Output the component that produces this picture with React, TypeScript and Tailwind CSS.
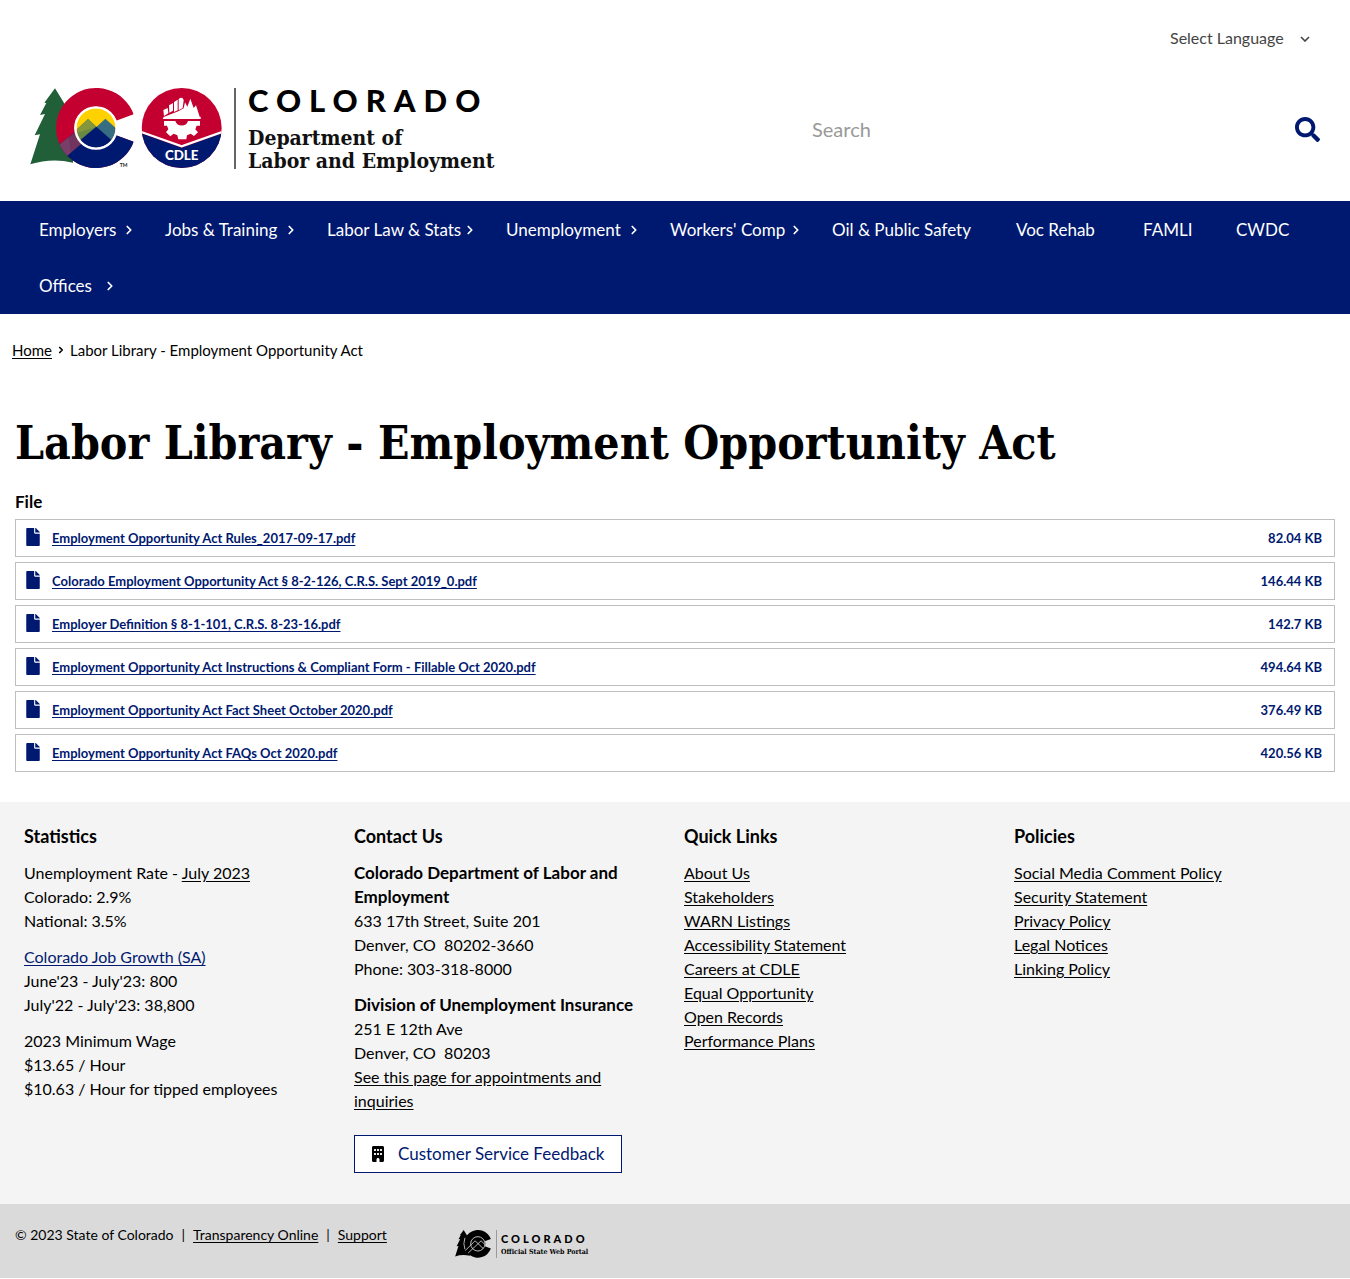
import React from "react";
import { FaFile, FaSearch } from "react-icons/fa";
import { FaBuilding } from "react-icons/fa6";
import { ChevronRight } from "lucide-react";

const serif = "font-['DejaVu_Serif_Condensed','DejaVu_Serif',serif]";

const navItems: { label: string; width: string; menu: boolean }[] = [
  { label: "Employers", width: "min-w-[126px]", menu: true },
  { label: "Jobs & Training", width: "min-w-[162px]", menu: true },
  { label: "Labor Law & Stats", width: "min-w-[179px]", menu: true },
  { label: "Unemployment", width: "min-w-[164px]", menu: true },
  { label: "Workers' Comp", width: "min-w-[162px]", menu: true },
  { label: "Oil & Public Safety", width: "min-w-[184px]", menu: false },
  { label: "Voc Rehab", width: "min-w-[127px]", menu: false },
  { label: "FAMLI", width: "min-w-[93px]", menu: false },
  { label: "CWDC", width: "min-w-[98px]", menu: false },
  { label: "Offices", width: "min-w-[107px]", menu: true },
];

const files = [
  ["Employment Opportunity Act Rules_2017-09-17.pdf", "82.04 KB"],
  ["Colorado Employment Opportunity Act § 8-2-126, C.R.S. Sept 2019_0.pdf", "146.44 KB"],
  ["Employer Definition § 8-1-101, C.R.S. 8-23-16.pdf", "142.7 KB"],
  ["Employment Opportunity Act Instructions & Compliant Form - Fillable Oct 2020.pdf", "494.64 KB"],
  ["Employment Opportunity Act Fact Sheet October 2020.pdf", "376.49 KB"],
  ["Employment Opportunity Act FAQs Oct 2020.pdf", "420.56 KB"],
];

const quickLinks = [
  "About Us",
  "Stakeholders",
  "WARN Listings",
  "Accessibility Statement",
  "Careers at CDLE",
  "Equal Opportunity",
  "Open Records",
  "Performance Plans",
];

const policies = [
  "Social Media Comment Policy",
  "Security Statement",
  "Privacy Policy",
  "Legal Notices",
  "Linking Policy",
];

function Link({ children, className = "" }: { children: React.ReactNode; className?: string }) {
  return (
    <a href="#" className={`underline underline-offset-2 ${className}`}>
      {children}
    </a>
  );
}

const tree =
  "M81 13 L110 60 L135 110 L135 236 Q70 221 7 241 L36 151 L20 154 L51 90 L36 93 L55 57 L49 56 Z";
const cShape =
  "M317 91 A120 120 0 1 0 317 173 L264 154 A64 64 0 1 1 264 110 Z";

function StateLogo() {
  return (
    <svg viewBox="6 12 576 243" className="h-[81px] w-48 shrink-0" role="img" aria-label="CDLE">
      <defs>
        <clipPath id="c-shape">
          <path d={cShape} />
        </clipPath>
        <clipPath id="disc">
          <circle cx="204" cy="132" r="59" />
        </clipPath>
        <clipPath id="badge">
          <circle cx="461" cy="132" r="120" />
        </clipPath>
      </defs>
      <path d={tree} fill="#215f38" />
      <circle cx="204" cy="132" r="66" fill="#fff" />
      <g clipPath="url(#c-shape)">
        <rect x="80" y="10" width="250" height="250" fill="#c3002f" />
        <path d="M80 192 L154 135 L204 132 L270 132 H330 V260 H80 Z" fill="#001970" />
        <path d="M85 189 L150 137 L178 165 L113 219 Z" fill="#70345f" />
        <path d="M85 189 L122 160 L128 206 L113 219 Z" fill="#793f68" />
      </g>
      <g clipPath="url(#disc)">
        <rect x="140" y="70" width="130" height="130" fill="#ffd100" />
        <path d="M140 142 L180 104 L232 152 L180 200 L140 200 Z" fill="#6a8a43" />
        <path d="M176 156 L232 104 L272 140 V200 H176 Z" fill="#376d82" />
        <path d="M204 128 L180 106 L140 142 V150 Z" fill="#85963d" />
        <path d="M140 182 L205 128 L264 180 V200 H140 Z" fill="#001970" />
      </g>
      <circle cx="204" cy="132" r="62" fill="none" stroke="#fff" strokeWidth="7" />
      <text x="275" y="250" fontSize="15" fontWeight="700" fontFamily="Lato, sans-serif" fill="#222">
        TM
      </text>

      <g clipPath="url(#badge)">
        <rect x="340" y="10" width="242" height="245" fill="#c3002f" />
        <path d="M340 148 L461 191 L582 148 V255 H340 Z" fill="#001970" />
        <path d="M340 144 L461 187 L582 144" fill="none" stroke="#fff" strokeWidth="7" />
      </g>
      <g fill="#fff">
        <path d="M406 78 L419 72 L421 88 L408 96 Z" />
        <path d="M423 64 L435 57 L435 80 L424 86 Z" />
        <path d="M438 54 L449 47 L449 79 L438 84 Z" />
        <path d="M452 45 Q463 36 467 48 L464 72 L452 79 Z" />
        <path d="M407 99 L451 82 L467 73 L471 55 L478 68 L487 44 L497 72 L504 64 L515 98 H518 V105 H404 Z" />
        <path d="M408 111 H516 V125 L506 125 L502 136 L510 145 L498 156 L488 149 L477 154 L475 166 H451 L448 154 L437 149 L427 157 L414 145 L421 136 L417 125 L408 125 Z" />
      </g>
      <path d="M442 111 A20 20 0 0 0 480 111 Z" fill="#c3002f" />
      <text x="461" y="227" textAnchor="middle" fontSize="40" fontWeight="900" fontFamily="Lato, sans-serif" fill="#fff">
        CDLE
      </text>
    </svg>
  );
}

function PortalMark() {
  return (
    <svg viewBox="6 12 312 243" className="h-7 w-9 shrink-0" aria-hidden="true">
      <path d={tree} fill="#000" />
      <path d={cShape} fill="#000" />
      <circle cx="204" cy="132" r="66" fill="#000" />
      <g fill="none" stroke="#dadada" strokeWidth="7">
        <circle cx="204" cy="132" r="62" />
        <path d="M95 190 L180 106 L250 172" />
        <path d="M120 212 L232 106 L264 136" />
        <path d="M92 80 Q74 130 92 180" />
      </g>
    </svg>
  );
}

function FooterColumn({ title, children }: { title: string; children: React.ReactNode }) {
  return (
    <section className="pr-6 pl-[9px]">
      <h2 className="mb-[13px] text-lg leading-6 font-bold">{title}</h2>
      <div className="space-y-3">{children}</div>
    </section>
  );
}

export default function App() {
  return (
    <div className="bg-white font-['Lato',sans-serif] text-base leading-6 text-black">
      <header>
        <div className="flex justify-end pt-6 pr-10">
          <div className="relative">
            <select
              aria-label="Select Language"
              className="h-7 w-[140px] appearance-none bg-transparent text-base text-[#444]"
            >
              <option>Select Language</option>
            </select>
            <svg
              viewBox="0 0 10 6"
              className="pointer-events-none absolute top-3 right-0 h-1.5 w-2.5"
              fill="none"
              stroke="#444"
              strokeWidth="1.6"
              aria-hidden="true"
            >
              <path d="M1 1 L5 5 L9 1" />
            </svg>
          </div>
        </div>
        <div className="flex items-start justify-between px-[30px] pt-9 pb-[29px]">
          <a href="#" className="flex">
            <StateLogo />
            <span className="ml-3 h-[81px] w-0.5 bg-[#666]" />
            <span className="ml-3 flex flex-col">
              <span className="text-[31px] leading-6 font-black tracking-[8px]">COLORADO</span>
              <span className={`${serif} mt-3.5 text-[21px] leading-[23px] font-bold text-[#111]`}>
                Department of
                <br />
                Labor and Employment
              </span>
            </span>
          </a>
          <form className="mt-[19px] flex w-[508px] items-center">
            <input
              type="search"
              aria-label="Search"
              placeholder="Search"
              className="h-11 min-w-0 flex-1 text-xl outline-none placeholder:text-[#999]"
            />
            <button type="button" aria-label="Submit search">
              <FaSearch className="size-[25px] text-[#001970]" />
            </button>
          </form>
        </div>
      </header>

      <nav className="bg-[#001970] px-[15px] pt-px text-[17px] text-white" aria-label="Main">
        <ul className="flex flex-wrap">
          {navItems.map((item) => (
            <li key={item.label} className={item.width}>
              <a href="#" className="flex h-14 items-center justify-between pr-[5px] pl-6 whitespace-nowrap">
                {item.label}
                {item.menu && <ChevronRight className="size-3.5" strokeWidth={3} aria-hidden="true" />}
              </a>
            </li>
          ))}
        </ul>
      </nav>

      <nav className="flex items-center px-3 pt-6 text-[15px]" aria-label="Breadcrumb">
        <Link>Home</Link>
        <ChevronRight className="mx-1 size-2.5" strokeWidth={4} aria-hidden="true" />
        <span>Labor Library - Employment Opportunity Act</span>
      </nav>

      <main className="px-[15px] pt-[53px] pb-[30px]">
        <h1 className={`${serif} text-[46px] leading-[56px] font-bold`}>
          Labor Library - Employment Opportunity Act
        </h1>
        <h2 className="mt-[19px] mb-[5px] text-[17px] font-bold">File</h2>
        <ul className="space-y-[5px] text-[13px] font-bold text-[#001970]">
          {files.map(([name, size]) => (
            <li key={name} className="flex h-[38px] items-center border border-[#bfbfbf] pr-3 pl-2.5">
              <FaFile className="mr-3 mb-0.5 h-[18px] w-3.5" aria-hidden="true" />
              <Link>{name}</Link>
              <span className="ml-auto">{size}</span>
            </li>
          ))}
        </ul>
      </main>

      <footer>
        <div className="grid grid-cols-4 bg-[#f4f4f4] px-[15px] pt-[22px] pb-[31px]">
          <FooterColumn title="Statistics">
            <p>
              Unemployment Rate - <Link>July 2023</Link>
              <br />
              Colorado: 2.9%
              <br />
              National: 3.5%
            </p>
            <p>
              <Link className="text-[#001970]">Colorado Job Growth (SA)</Link>
              <br />
              June'23 - July'23: 800
              <br />
              July'22 - July'23: 38,800
            </p>
            <p>
              2023 Minimum Wage
              <br />
              $13.65 / Hour
              <br />
              $10.63 / Hour for tipped employees
            </p>
          </FooterColumn>
          <FooterColumn title="Contact Us">
            <p>
              <strong className="text-[17px]">Colorado Department of Labor and Employment</strong>
              <br />
              633 17th Street, Suite 201
              <br />
              Denver, CO&nbsp; 80202-3660
              <br />
              Phone: 303-318-8000
            </p>
            <p>
              <strong className="text-[17px]">Division of Unemployment Insurance</strong>
              <br />
              251 E 12th Ave
              <br />
              Denver, CO&nbsp; 80203
              <br />
              <Link>See this page for appointments and inquiries</Link>
            </p>
            <a
              href="#"
              className="mt-[22px] flex h-[38px] w-[268px] items-center border border-[#001970] bg-white pl-[17px] text-[17px] whitespace-nowrap text-[#001970]"
            >
              <FaBuilding className="mr-3.5 h-4 w-3 text-black" aria-hidden="true" />
              Customer Service Feedback
            </a>
          </FooterColumn>
          <FooterColumn title="Quick Links">
            <ul>
              {quickLinks.map((l) => (
                <li key={l}>
                  <Link>{l}</Link>
                </li>
              ))}
            </ul>
          </FooterColumn>
          <FooterColumn title="Policies">
            <ul>
              {policies.map((l) => (
                <li key={l}>
                  <Link>{l}</Link>
                </li>
              ))}
            </ul>
          </FooterColumn>
        </div>
        <div className="flex items-start bg-[#dadada] px-[15px] pt-[19px] pb-5 text-sm leading-6">
          <p className="flex w-[440px] gap-2 pb-[11px] whitespace-nowrap">
            <span>© 2023 State of Colorado</span>
            <span>|</span>
            <Link>Transparency Online</Link>
            <span>|</span>
            <Link>Support</Link>
          </p>
          <a href="#" className="mt-[7px] flex">
            <PortalMark />
            <span className="mr-1 ml-[5px] h-7 w-px bg-[#999]" />
            <span className="flex flex-col pt-1 whitespace-nowrap">
              <span className="text-[11px] leading-[9px] font-black tracking-[3px]">COLORADO</span>
              <span className={`${serif} mt-1 text-[7px] leading-[9px] font-bold`}>Official State Web Portal</span>
            </span>
          </a>
        </div>
      </footer>
    </div>
  );
}
